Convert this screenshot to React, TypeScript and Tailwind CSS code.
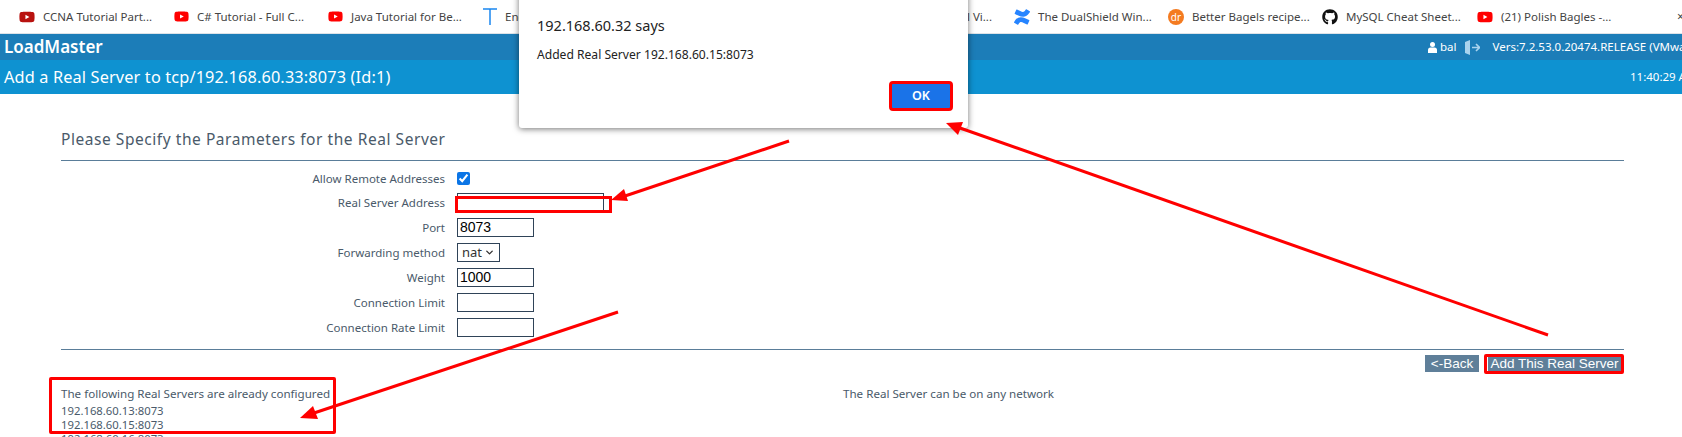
import { FaGithub, FaYoutube } from 'react-icons/fa';
import { SiConfluence } from 'react-icons/si';
import { ChevronDown } from 'lucide-react';

const Bookmark = ({ icon, text, className }: { icon?: React.ReactNode; text: string; className: string }) => (
  <div className={`flex items-center gap-2 shrink-0 ${className}`}>
    {icon}
    <span className="text-[11.5px] text-[#444] whitespace-nowrap">{text}</span>
  </div>
);

const Row = ({ label, h = 'h-[25px]', children }: { label: string; h?: string; children: React.ReactNode }) => (
  <>
    <div className="text-right text-[11.5px] text-[#4a5a6a]">{label}</div>
    <div className={`flex items-center ${h}`}>{children}</div>
  </>
);

const Field = ({ value, w = 'w-[77px]' }: { value?: string; w?: string }) => (
  <input
    readOnly
    value={value ?? ''}
    className={`${w} h-[19px] border border-[#2f4358] px-[2px] text-[14px] text-black font-['Liberation_Sans',sans-serif] outline-none`}
  />
);

export default function App() {
  return (
    <div className="relative w-[1682px] h-[437px] overflow-hidden bg-white font-['Noto_Sans',sans-serif]">
      <div className="flex items-center h-[34px] border-b border-[#dde3e8] bg-white">
        <Bookmark className="ml-[19px] w-[155px]" icon={<FaYoutube className="text-[#b8120f]" size={16} />} text="CCNA Tutorial Part..." />
        <Bookmark className="w-[154px]" icon={<FaYoutube className="text-[#f00]" size={15} />} text="C# Tutorial - Full C..." />
        <Bookmark className="w-[155px]" icon={<FaYoutube className="text-[#f00]" size={15} />} text="Java Tutorial for Be..." />
        <Bookmark
          className="w-[376px]"
          icon={
            <svg width="14" height="17" viewBox="0 0 14 17" fill="none" stroke="#1a86f0" strokeWidth="1.5">
              <path d="M0 1H14M7 1V17" />
            </svg>
          }
          text="Engineering"
        />
        <Bookmark className="w-[155px] justify-end pr-[22px]" text="Tutorial Vi..." />
        <Bookmark className="w-[154px]" icon={<SiConfluence className="text-[#2684ff]" size={16} />} text="The DualShield Win..." />
        <Bookmark
          className="w-[154px]"
          icon={
            <span className="w-[16px] h-[16px] rounded-full bg-[#f47b20] text-white text-[10px] leading-[16px] text-center">dr</span>
          }
          text="Better Bagels recipe..."
        />
        <Bookmark className="w-[155px]" icon={<FaGithub className="text-[#111]" size={16} />} text="MySQL Cheat Sheet..." />
        <Bookmark className="w-[200px]" icon={<FaYoutube className="text-[#f00]" size={16} />} text="(21) Polish Bagles -..." />
      </div>
      <span className="absolute left-[1677px] top-[8px] text-[#444] text-[12px]">×</span>

      <div className="flex items-center justify-between h-[26px] bg-[#1c7db8] text-white whitespace-nowrap">
        <span className="ml-1 text-[17px] font-semibold">LoadMaster</span>
        <div className="flex items-center w-[254px] shrink-0 text-[11.5px] overflow-hidden">
          <svg className="shrink-0" width="9" height="11" viewBox="0 0 9 11" fill="white">
            <circle cx="4.5" cy="2.5" r="2.5" />
            <path d="M0 11V8Q0 5.5 2.5 5.5H6.5Q9 5.5 9 8V11Z" />
          </svg>
          <span className="ml-[3px] shrink-0">bal</span>
          <svg className="ml-[8px] shrink-0" width="15" height="15" viewBox="0 0 15 15" fill="none">
            <path d="M0 2L5 0V15L0 13Z" fill="#a9d3ee" />
            <path d="M7 7.5H14M11 4L14.5 7.5L11 11" stroke="#a9d3ee" strokeWidth="1.6" />
          </svg>
          <span className="ml-[13px] shrink-0">Vers:7.2.53.0.20474.RELEASE (VMware)</span>
        </div>
      </div>
      <div className="flex items-center justify-between h-[34px] bg-[#0e92d1] text-white whitespace-nowrap">
        <span className="ml-1 text-[16.3px] tracking-[0.15px]">Add a Real Server to tcp/192.168.60.33:8073 (Id:1)</span>
        <span className="w-[52px] shrink-0 text-[11.5px] overflow-hidden">11:40:29 AM</span>
      </div>

      <div className="ml-[61px] w-[1563px]">
        <div className="mt-[34px] pb-[9px] border-b border-[#5a7d99] text-[15.5px] text-[#4a5a6a] tracking-[0.55px]">
          Please Specify the Parameters for the Real Server
        </div>
        <div className="grid grid-cols-[384px_1fr] gap-x-3 items-center mt-[6px]">
          <Row label="Allow Remote Addresses" h="h-[23px]">
            <input readOnly type="checkbox" checked className="w-[13px] h-[13px] accent-[#0b75e6]" />
          </Row>
          <Row label="Real Server Address">
            <Field w="w-[147px]" />
          </Row>
          <Row label="Port">
            <Field value="8073" />
          </Row>
          <Row label="Forwarding method">
            <div className="flex items-center justify-between w-[43px] h-[19px] border border-[#2f4358] px-[4px] text-[13px] text-[#333]">
              nat
              <ChevronDown size={11} strokeWidth={3} />
            </div>
          </Row>
          <Row label="Weight">
            <Field value="1000" />
          </Row>
          <Row label="Connection Limit">
            <Field />
          </Row>
          <Row label="Connection Rate Limit">
            <Field />
          </Row>
        </div>
        <div className="mt-[9px] border-t border-[#5a7d99] flex justify-end gap-[9px] pt-[5px] pr-[3px] font-['Liberation_Sans',sans-serif] text-[13.5px] text-white">
          <button className="w-[54px] h-[17px] leading-[17px] bg-[#5f7f99]">&lt;-Back</button>
          <button className="w-[133px] h-[17px] leading-[17px] bg-[#5f7f99]">Add This Real Server</button>
        </div>
        <div className="flex mt-[15px] text-[11.6px] text-[#4a5a6a] leading-[14px]">
          <div className="w-[782px]">
            <div className="mb-[3px]">The following Real Servers are already configured</div>
            <div className="text-[11.3px]">192.168.60.13:8073</div>
            <div className="text-[11.3px]">192.168.60.15:8073</div>
            <div className="text-[11.3px]">192.168.60.16:8073</div>
          </div>
          <div>The Real Server can be on any network</div>
        </div>
      </div>

      {/* alert dialog over the page */}
      <div className="absolute left-[519px] top-[-10px] w-[449px] h-[138px] bg-white rounded-[3px] shadow-[0_1px_6px_rgba(0,0,0,0.55)]">
        <div className="absolute left-[18px] top-[25px] text-[14.5px] text-[#222]">192.168.60.32 says</div>
        <div className="absolute left-[18px] top-[56px] text-[12.1px] text-[#222]">Added Real Server 192.168.60.15:8073</div>
        <button className="absolute left-[370px] top-[91px] w-[64px] h-[30px] rounded-[4px] bg-[#1a73e8] border-[3px] border-[#f00] text-white text-[12.5px] font-semibold">OK</button>
      </div>

      {/* red annotations */}
      <div className="absolute left-[455px] top-[196px] w-[157px] h-[17px] border-[3px] border-[#f00]" />
      <div className="absolute left-[49px] top-[377px] w-[287px] h-[57px] border-[3px] border-[#f00] rounded-[2px]" />
      <div className="absolute left-[1484px] top-[354px] w-[140px] h-[20px] border-[3px] border-[#f00] rounded-[2px]" />
      <svg className="absolute inset-0" width="1682" height="437" fill="none">
        <g stroke="#f00" strokeWidth="3">
          <path d="M789 141L625 196" />
          <path d="M1548 335L960 128" />
          <path d="M618 312L314 413" />
        </g>
        <g fill="#f00">
          <path d="M611 200L624 189L628 201Z" />
          <path d="M946 123L963 122L958 135Z" />
          <path d="M300 418L313 406L318 419Z" />
        </g>
      </svg>
    </div>
  );
}
